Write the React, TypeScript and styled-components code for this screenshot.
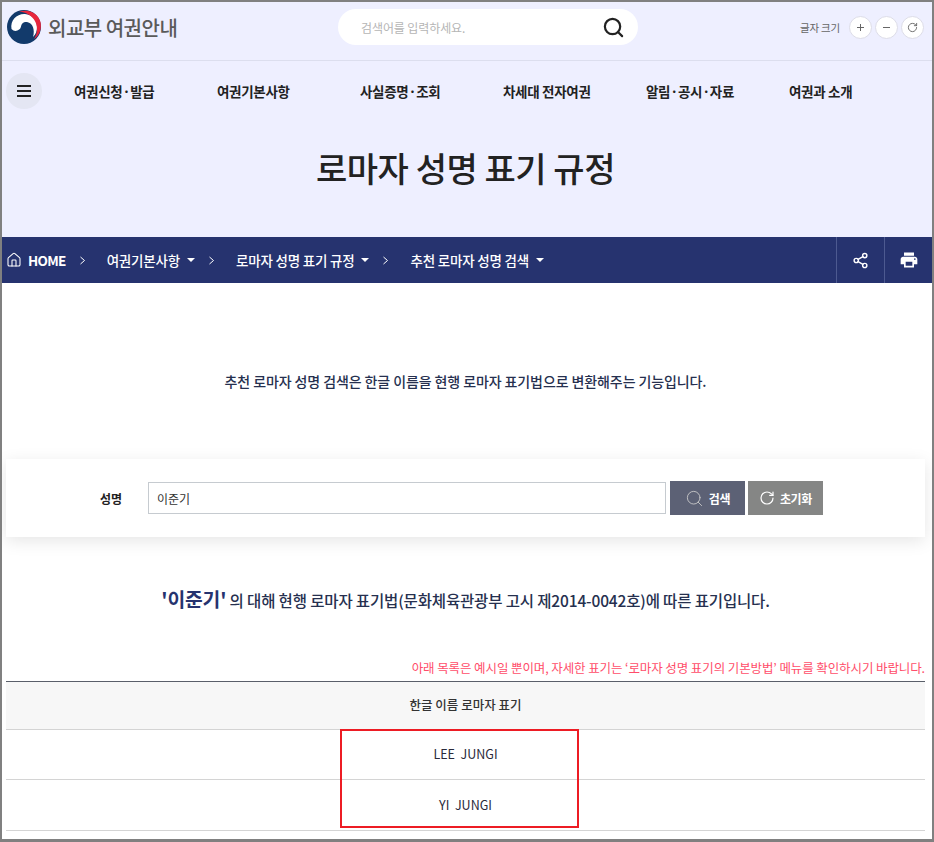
import React from "react";
import styled, { createGlobalStyle } from "styled-components";
import { Search, RotateCw, Share2, House } from "lucide-react";
import { MdPrint } from "react-icons/md";

const GlobalStyle = createGlobalStyle`
  html, body {
    margin: 0;
    padding: 0;
    background: #fff;
  }
  * {
    box-sizing: border-box;
  }
  body {
    font-family: "Noto Sans CJK KR", "Noto Sans", sans-serif;
    color: #222;
  }
`;

const Frame = styled.div`
  position: relative;
  width: 934px;
  height: 842px;
  border: 2px solid #808080;
  border-bottom-width: 3px;
  overflow: hidden;
  background: #fff;
`;

const Hero = styled.div`
  background: #eeefff;
  height: 235px;
`;

const TopBar = styled.div`
  height: 59px;
  border-bottom: 1px solid #dcdeee;
  display: flex;
  align-items: center;
  padding: 0 8px 8px 4px;
`;

const Brand = styled.div`
  display: flex;
  align-items: center;
  gap: 6px;
  width: 332px;
  font-size: 20px;
  font-weight: 500;
  letter-spacing: -0.5px;
  color: #5a5a5a;
`;

const SearchPill = styled.div`
  width: 300px;
  height: 36px;
  border-radius: 18px;
  background: #fff;
  display: flex;
  align-items: center;
  justify-content: space-between;
  padding: 0 13px 0 23px;
  font-size: 12px;
  letter-spacing: -0.1px;
  color: #b5b5b5;
`;

const FontSize = styled.div`
  margin-left: auto;
  display: flex;
  align-items: center;
  gap: 3px;
  font-size: 10.5px;
  letter-spacing: -0.2px;
  color: #666;
`;

const FontLabel = styled.span`
  margin-right: 6px;
`;

const RoundButton = styled.button`
  width: 23px;
  height: 23px;
  padding: 0;
  border: 1px solid #dddde8;
  border-radius: 50%;
  background: #fff;
  color: #666;
  display: flex;
  align-items: center;
  justify-content: center;
`;

const MainNav = styled.nav`
  height: 60px;
  display: flex;
  align-items: center;
  padding-left: 4px;
`;

const MenuButton = styled.button`
  width: 36px;
  height: 36px;
  padding: 0;
  border: 0;
  border-radius: 50%;
  background: #e4e6f3;
  display: flex;
  align-items: center;
  justify-content: center;
  margin-right: 32px;
`;

const MenuLines = styled.span`
  display: block;
  width: 14px;
  height: 12px;
  border-top: 2px solid #222;
  border-bottom: 2px solid #222;
  position: relative;
  &::after {
    content: "";
    position: absolute;
    left: 0;
    right: 0;
    top: 3px;
    height: 2px;
    background: #222;
  }
`;

const NavItem = styled.a`
  width: 143px;
  margin-top: -1px;
  font-size: 13.5px;
  font-weight: 700;
  letter-spacing: -0.3px;
  color: #222;
  white-space: nowrap;
`;

const PageTitle = styled.h1`
  margin: 0;
  padding-top: 23px;
  padding-right: 3px;
  text-align: center;
  font-size: 34px;
  line-height: 48px;
  font-weight: 500;
  letter-spacing: -0.45px;
  color: #222;
`;

const Crumbs = styled.div`
  height: 46px;
  background: #26336f;
  display: flex;
  align-items: center;
  color: #fff;
  font-size: 13.5px;
  font-weight: 500;
  letter-spacing: -0.2px;
  padding-left: 4px;
`;

const Crumb = styled.span`
  display: flex;
  align-items: center;
  white-space: nowrap;
`;

const HomeLink = styled(Crumb)`
  gap: 6px;
  font-weight: 700;
  letter-spacing: -0.7px;
`;

const Arrow = styled.svg`
  margin: 0 21px 0 13px;
`;

const Caret = styled.i`
  width: 0;
  height: 0;
  margin-left: 7px;
  border-left: 4px solid transparent;
  border-right: 4px solid transparent;
  border-top: 4px solid #fff;
`;

const CrumbTools = styled.div`
  margin-left: auto;
  display: flex;
  height: 100%;
`;

const CrumbTool = styled.button`
  width: 48px;
  height: 100%;
  padding: 0;
  border: 0;
  border-left: 1px solid #4d5a90;
  background: none;
  color: #fff;
  display: flex;
  align-items: center;
  justify-content: center;
`;

const Intro = styled.p`
  margin: 0;
  padding-top: 87px;
  padding-right: 3px;
  height: 176px;
  text-align: center;
  font-size: 14px;
  line-height: 22px;
  font-weight: 500;
  letter-spacing: -0.1px;
  color: #26304f;
`;

const SearchCard = styled.div`
  margin: 0 7px 0 4px;
  height: 78px;
  background: #fff;
  box-shadow: 0 4px 16px rgba(0, 0, 0, 0.1);
  display: flex;
  align-items: center;
  padding-left: 94px;
`;

const FieldLabel = styled.label`
  width: 48px;
  font-size: 12px;
  font-weight: 700;
  color: #222;
`;

const NameInput = styled.input`
  width: 518px;
  height: 32px;
  border: 1px solid #c6cbd0;
  padding: 0 8px;
  font: inherit;
  font-size: 12px;
  color: #333;
  background: #fff;
  margin-right: 4px;
`;

const ActionButton = styled.button<{ $bg: string; $mr?: number }>`
  width: 75px;
  height: 34px;
  margin-right: ${(p) => p.$mr ?? 0}px;
  padding: 0;
  border: 0;
  background: ${(p) => p.$bg};
  color: #fff;
  font: inherit;
  font-size: 12px;
  font-weight: 700;
  letter-spacing: -0.3px;
  display: flex;
  align-items: center;
  justify-content: center;
  gap: 5px;
`;

const ResultLine = styled.p`
  margin: 0;
  padding-top: 46px;
  padding-right: 3px;
  height: 110px;
  text-align: center;
  font-size: 15.5px;
  line-height: 32px;
  font-weight: 500;
  letter-spacing: -0.15px;
  color: #26304f;
`;

const ResultName = styled.strong`
  font-size: 19.3px;
  font-weight: 700;
  color: #26336f;
`;

const Note = styled.p`
  margin: 0 7px 0 0;
  height: 34px;
  padding-top: 11px;
  text-align: right;
  font-size: 12.5px;
  line-height: 20px;
  letter-spacing: -0.1px;
  color: #ff4d6a;
  white-space: nowrap;
`;

const NameTable = styled.table`
  width: 919px;
  margin-left: 4px;
  border-collapse: collapse;
  border-top: 1px solid #5a5f6a;
  table-layout: fixed;
`;

const HeadCell = styled.th`
  height: 48px;
  background: #f7f7f7;
  border-bottom: 1px solid #d4d4d4;
  font-size: 12.5px;
  font-weight: 500;
  color: #333;
  text-align: center;
  padding: 0 0 2px;
`;

const BodyCell = styled.td<{ $h: number }>`
  height: ${(p) => p.$h}px;
  border-bottom: 1px solid #d4d4d4;
  font-size: 12.5px;
  color: #2a2a3a;
  text-align: center;
  padding: 0 0 2px;
  white-space: pre;
`;

const Highlight = styled.div`
  position: absolute;
  left: 338px;
  top: 727px;
  width: 239px;
  height: 99px;
  border: 2px solid #ed1c24;
  pointer-events: none;
`;

const Logo = () => (
  <svg width="36" height="36" viewBox="0 0 36 36" aria-hidden="true">
    <circle cx="18" cy="18" r="17" fill="#123a6b" />
    <path d="M5.5 20 C4 11 11 4.5 19 5 C26 5.5 31 11 31 18 C31 22 30 25 27 28 C29 21 27 14 21 13 C17 12.5 15.5 15 15 17.5 C14.5 21 9 24 5.5 20 Z" fill="#fff" />
    <path d="M13 3 C22 -0.5 32 4 34.5 13 C36 20 33 27 28 30 C32 24 32 16 28 10.5 C24 5 18 2.5 13 3 Z" fill="#e8263c" />
  </svg>
);

const CrumbArrow = () => (
  <Arrow width="7" height="9" viewBox="0 0 7 9" aria-hidden="true">
    <path d="M1.5 1l4 3.5-4 3.5" fill="none" stroke="#fff" strokeWidth="1" />
  </Arrow>
);

const App = () => {
  return (
    <Frame>
      <GlobalStyle />
      <Hero>
        <TopBar>
          <Brand>
            <Logo />
            외교부 여권안내
          </Brand>
          <SearchPill>
            검색어를 입력하세요.
            <Search size={23} color="#222" strokeWidth={2.3} />
          </SearchPill>
          <FontSize>
            <FontLabel>글자 크기</FontLabel>
            <RoundButton>
              <svg width="9" height="9" viewBox="0 0 9 9"><path d="M4.5 1v7M1 4.5h7" stroke="#666" fill="none" /></svg>
            </RoundButton>
            <RoundButton>
              <svg width="9" height="9" viewBox="0 0 9 9"><path d="M1 4.5h7" stroke="#666" fill="none" /></svg>
            </RoundButton>
            <RoundButton>
              <RotateCw size={11} />
            </RoundButton>
          </FontSize>
        </TopBar>
        <MainNav>
          <MenuButton aria-label="menu">
            <MenuLines />
          </MenuButton>
          <NavItem>여권신청·발급</NavItem>
          <NavItem>여권기본사항</NavItem>
          <NavItem>사실증명·조회</NavItem>
          <NavItem>차세대 전자여권</NavItem>
          <NavItem>알림·공시·자료</NavItem>
          <NavItem>여권과 소개</NavItem>
        </MainNav>
        <PageTitle>로마자 성명 표기 규정</PageTitle>
      </Hero>
      <Crumbs>
        <HomeLink>
          <House size={16} strokeWidth={1.6} />
          HOME
        </HomeLink>
        <CrumbArrow />
        <Crumb>여권기본사항<Caret /></Crumb>
        <CrumbArrow />
        <Crumb>로마자 성명 표기 규정<Caret /></Crumb>
        <CrumbArrow />
        <Crumb>추천 로마자 성명 검색<Caret /></Crumb>
        <CrumbTools>
          <CrumbTool><Share2 size={17} /></CrumbTool>
          <CrumbTool><MdPrint size={20} /></CrumbTool>
        </CrumbTools>
      </Crumbs>
      <Intro>추천 로마자 성명 검색은 한글 이름을 현행 로마자 표기법으로 변환해주는 기능입니다.</Intro>
      <SearchCard>
        <FieldLabel>성명</FieldLabel>
        <NameInput defaultValue="이준기" />
        <ActionButton $bg="#5c6175" $mr={3}>
          <Search size={19} strokeWidth={1.1} color="#ccc" />
          검색
        </ActionButton>
        <ActionButton $bg="#858685">
          <RotateCw size={16} strokeWidth={1.8} />
          초기화
        </ActionButton>
      </SearchCard>
      <ResultLine>
        <ResultName>'이준기'</ResultName> 의 대해 현행 로마자 표기법(문화체육관광부 고시 제2014-0042호)에 따른 표기입니다.
      </ResultLine>
      <Note>아래 목록은 예시일 뿐이며, 자세한 표기는 ‘로마자 성명 표기의 기본방법’ 메뉴를 확인하시기 바랍니다.</Note>
      <NameTable>
        <thead>
          <tr><HeadCell>한글 이름 로마자 표기</HeadCell></tr>
        </thead>
        <tbody>
          <tr><BodyCell $h={50}>LEE  JUNGI</BodyCell></tr>
          <tr><BodyCell $h={51}>YI  JUNGI</BodyCell></tr>
        </tbody>
      </NameTable>
      <Highlight />
    </Frame>
  );
};

export default App;
